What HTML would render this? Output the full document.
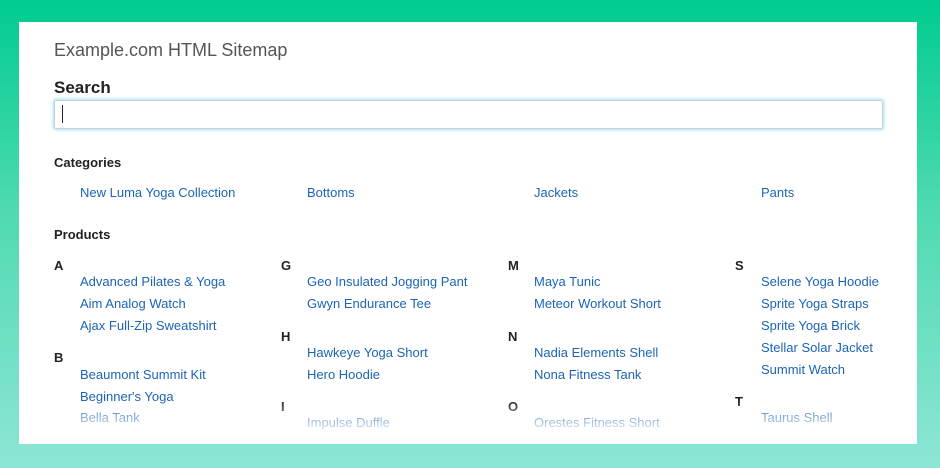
<!DOCTYPE html>
<html><head><meta charset="utf-8"><style>
html,body{margin:0;padding:0;}
body{width:940px;height:468px;overflow:hidden;position:relative;background:linear-gradient(180deg,#00cc90 0%,#4fdab0 45%,#8de6d5 100%);font-family:"Liberation Sans",sans-serif;}
.card{position:absolute;left:19px;top:22px;width:898px;height:422px;background:#fff;overflow:hidden;}
.t{position:absolute;white-space:nowrap;line-height:18px;}
.l{font-size:13px;color:#1c64b4;}
.h{font-size:13px;font-weight:bold;color:#222;}
.fade{position:absolute;left:0;right:0;top:378px;height:44px;background:linear-gradient(rgba(255,255,255,0),rgba(255,255,255,.72) 60%,rgba(255,255,255,.8));}
</style></head><body>
<div class="card">
<div class="t" style="left:35px;top:17px;font-size:18px;color:#555;line-height:22px;">Example.com HTML Sitemap</div>
<div class="t" style="left:35px;top:56px;font-size:17px;font-weight:bold;color:#222;line-height:20px;">Search</div>
<div style="position:absolute;left:35px;top:78px;width:827px;height:27px;border:1px solid #cfcfcf;box-shadow:0 0 3px 1px #9be0f7;border-radius:2px;"></div>
<div style="position:absolute;left:43px;top:83px;width:1px;height:18px;background:#222;"></div>
<div class="t h" style="left:35px;top:132px;">Categories</div>
<div class="t l" style="left:61px;top:162px;">New Luma Yoga Collection</div>
<div class="t l" style="left:288px;top:162px;">Bottoms</div>
<div class="t l" style="left:515px;top:162px;">Jackets</div>
<div class="t l" style="left:742px;top:162px;">Pants</div>
<div class="t h" style="left:35px;top:204px;">Products</div>

<div class="t h" style="left:35px;top:235px;">A</div>
<div class="t l" style="left:61px;top:251px;">Advanced Pilates &amp; Yoga</div>
<div class="t l" style="left:61px;top:273px;">Aim Analog Watch</div>
<div class="t l" style="left:61px;top:295px;">Ajax Full-Zip Sweatshirt</div>
<div class="t h" style="left:35px;top:327px;">B</div>
<div class="t l" style="left:61px;top:344px;">Beaumont Summit Kit</div>
<div class="t l" style="left:61px;top:366px;">Beginner's Yoga</div>
<div class="t l" style="left:61px;top:387px;">Bella Tank</div>

<div class="t h" style="left:262px;top:235px;">G</div>
<div class="t l" style="left:288px;top:251px;">Geo Insulated Jogging Pant</div>
<div class="t l" style="left:288px;top:273px;">Gwyn Endurance Tee</div>
<div class="t h" style="left:262px;top:306px;">H</div>
<div class="t l" style="left:288px;top:322px;">Hawkeye Yoga Short</div>
<div class="t l" style="left:288px;top:344px;">Hero Hoodie</div>
<div class="t h" style="left:262px;top:376px;">I</div>
<div class="t l" style="left:288px;top:392px;">Impulse Duffle</div>

<div class="t h" style="left:489px;top:235px;">M</div>
<div class="t l" style="left:515px;top:251px;">Maya Tunic</div>
<div class="t l" style="left:515px;top:273px;">Meteor Workout Short</div>
<div class="t h" style="left:489px;top:306px;">N</div>
<div class="t l" style="left:515px;top:322px;">Nadia Elements Shell</div>
<div class="t l" style="left:515px;top:344px;">Nona Fitness Tank</div>
<div class="t h" style="left:489px;top:376px;">O</div>
<div class="t l" style="left:515px;top:392px;">Orestes Fitness Short</div>

<div class="t h" style="left:716px;top:235px;">S</div>
<div class="t l" style="left:742px;top:251px;">Selene Yoga Hoodie</div>
<div class="t l" style="left:742px;top:273px;">Sprite Yoga Straps</div>
<div class="t l" style="left:742px;top:295px;">Sprite Yoga Brick</div>
<div class="t l" style="left:742px;top:317px;">Stellar Solar Jacket</div>
<div class="t l" style="left:742px;top:339px;">Summit Watch</div>
<div class="t h" style="left:716px;top:371px;">T</div>
<div class="t l" style="left:742px;top:387px;">Taurus Shell</div>
<div class="fade"></div>
</div>
</body></html>
